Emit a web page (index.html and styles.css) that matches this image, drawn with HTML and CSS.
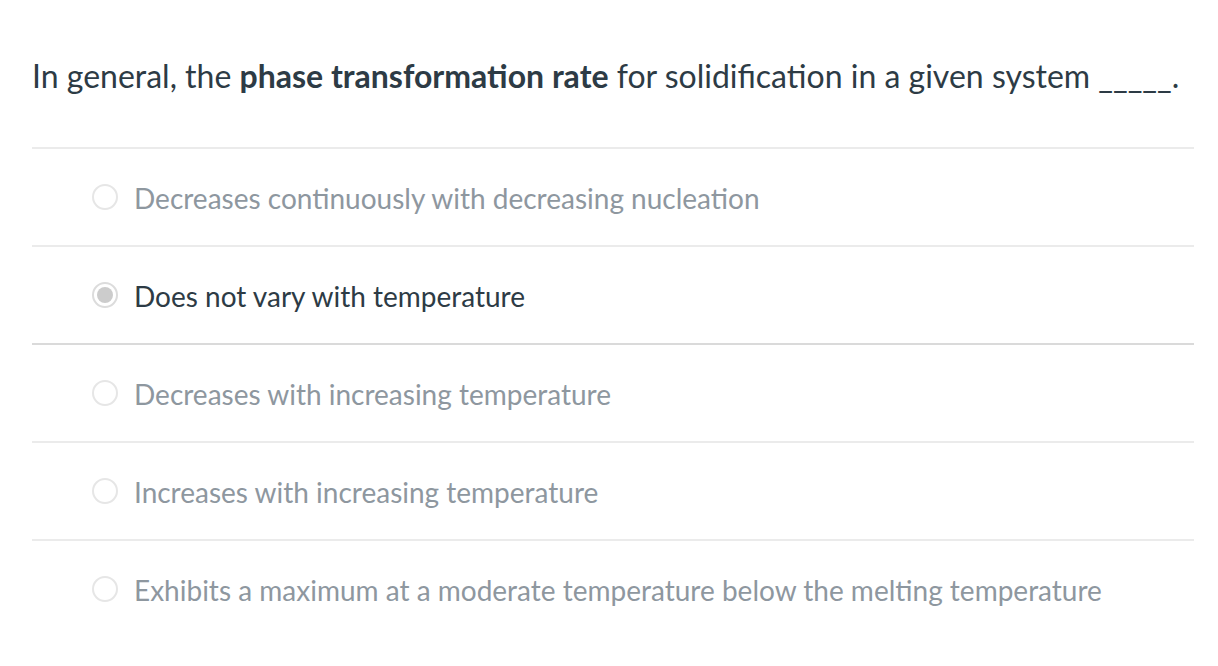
FILE: index.html
```html
<!DOCTYPE html>
<html lang="en">
<head>
<meta charset="utf-8">
<title>Quiz question</title>
<link rel="stylesheet" href="styles.css">
</head>
<body>
<main class="quiz">
  <p class="question">In general, the <strong>phase transformation rate</strong> for solidification in a given system _____.</p>
  <ul class="answers">
    <li class="answer"><span class="radio"></span><span class="label">Decreases continuously with decreasing nucleation</span></li>
    <li class="answer selected"><span class="radio"></span><span class="label">Does not vary with temperature</span></li>
    <li class="answer"><span class="radio"></span><span class="label">Decreases with increasing temperature</span></li>
    <li class="answer"><span class="radio"></span><span class="label">Increases with increasing temperature</span></li>
    <li class="answer"><span class="radio"></span><span class="label">Exhibits a maximum at a moderate temperature below the melting temperature</span></li>
  </ul>
</main>
</body>
</html>
```
FILE: styles.css
```css
html, body {
  margin: 0;
  padding: 0;
  background: #ffffff;
}
body {
  font-family: Lato, "Open Sans", sans-serif;
  color: #2d3b45;
}
.quiz {
  padding: 0 24px 0 32px;
}
.question {
  margin: 0;
  padding-top: 56px;
  height: 147px;
  box-sizing: border-box;
  font-size: 32px;
  line-height: 39px;
}
.question strong {
  font-weight: 700;
}
.answers {
  list-style: none;
  margin: 0;
  padding: 0;
}
.answer {
  display: flex;
  align-items: center;
  height: 98px;
  box-sizing: border-box;
  border-top: 2px solid #ebebeb;
  padding-left: 60px;
  padding-top: 2px;
  gap: 16px;
  font-size: 28px;
  color: #8e979f;
}
.answer.selected {
  color: #2d3b45;
}
.answer.selected + .answer {
  border-top-color: #dadada;
}
.radio {
  flex: none;
  width: 26px;
  height: 26px;
  box-sizing: border-box;
  border: 2px solid #e6e6e6;
  border-radius: 50%;
  background: #fff;
  position: relative;
  margin-top: -2px;
}
.selected .radio {
  border-color: #dcdcdc;
}
.selected .radio::after {
  content: "";
  position: absolute;
  left: 3px;
  top: 3px;
  width: 16px;
  height: 16px;
  border-radius: 50%;
  background: #cccccc;
}
```
